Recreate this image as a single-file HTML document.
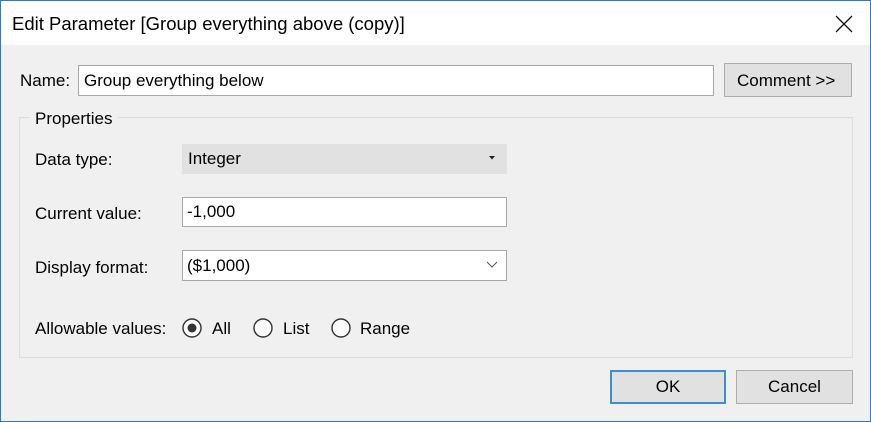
<!DOCTYPE html>
<html><head><style>
body{margin:0;width:871px;height:422px;overflow:hidden;font-family:"Liberation Sans",sans-serif;font-size:17px;color:#000;}
#w{position:absolute;left:0;top:0;width:869px;height:420px;border:1px solid #2b79c9;background:#f0f0f0;}
#tb{position:absolute;left:0;top:0;width:869px;height:44px;background:#fff;}
.a{position:absolute;white-space:nowrap;}
.box{position:absolute;box-sizing:border-box;}
.t{position:absolute;line-height:20px;white-space:nowrap;}
</style></head><body>
<div id="w">
<div id="tb"></div>
<div class="t" style="left:11px;top:13px;font-size:18.5px">Edit Parameter [Group everything above (copy)]</div>
<svg class="a" style="left:834px;top:14px" width="18" height="18"><path d="M1 1L17 17M17 1L1 17" stroke="#111" stroke-width="1.3"/></svg>

<div class="t" style="left:19px;top:70px">Name:</div>
<div class="box" style="left:77px;top:64px;width:636px;height:31px;background:#fff;border:1px solid #a8a8a8"></div>
<div class="t" style="left:83px;top:70px">Group everything below</div>
<div class="box" style="left:723px;top:62px;width:128px;height:34px;background:#e1e1e1;border:1px solid #adadad"></div>
<div class="t" style="left:736px;top:70px">Comment &gt;&gt;</div>

<div class="box" style="left:18px;top:116px;width:834px;height:241px;border:1px solid #dcdcdc"></div>
<div class="box" style="left:28px;top:108px;width:88px;height:18px;background:#f0f0f0"></div>
<div class="t" style="left:34px;top:108px">Properties</div>

<div class="t" style="left:34px;top:149px">Data type:</div>
<div class="box" style="left:181px;top:143px;width:325px;height:30px;background:#e1e1e1"></div>
<div class="t" style="left:187px;top:148px">Integer</div>
<svg class="a" style="left:488px;top:155px" width="6" height="4"><path d="M0 0H6L3 3.5Z" fill="#222"/></svg>

<div class="t" style="left:34px;top:203px">Current value:</div>
<div class="box" style="left:181px;top:196px;width:325px;height:30px;background:#fff;border:1px solid #a8a8a8"></div>
<div class="t" style="left:186px;top:201px">-1,000</div>

<div class="t" style="left:34px;top:257px">Display format:</div>
<div class="box" style="left:181px;top:249px;width:325px;height:31px;background:#fff;border:1px solid #a8a8a8"></div>
<div class="t" style="left:186px;top:255px">($1,000)</div>
<svg class="a" style="left:485px;top:260px" width="12" height="8"><path d="M1 1L6 6L11 1" stroke="#555" fill="none" stroke-width="1"/></svg>

<div class="t" style="left:34px;top:318px">Allowable values:</div>
<svg class="a" style="left:180px;top:316px" width="200" height="24">
<circle cx="11" cy="11" r="9" fill="#fff" stroke="#333" stroke-width="1.4"/><circle cx="11" cy="11" r="4.5" fill="#333"/>
<circle cx="82" cy="11" r="9" fill="#fff" stroke="#333" stroke-width="1.4"/>
<circle cx="160" cy="11" r="9" fill="#fff" stroke="#333" stroke-width="1.4"/>
</svg>
<div class="t" style="left:211px;top:318px">All</div>
<div class="t" style="left:282px;top:318px">List</div>
<div class="t" style="left:359px;top:318px">Range</div>

<div class="box" style="left:609px;top:369px;width:116px;height:34px;background:#e1e1e1;border:2px solid #3c8fd6"></div>
<div class="t" style="left:609px;top:376px;width:116px;text-align:center">OK</div>
<div class="box" style="left:735px;top:369px;width:117px;height:34px;background:#e1e1e1;border:1px solid #adadad"></div>
<div class="t" style="left:735px;top:376px;width:117px;text-align:center">Cancel</div>
</div>
</body></html>
